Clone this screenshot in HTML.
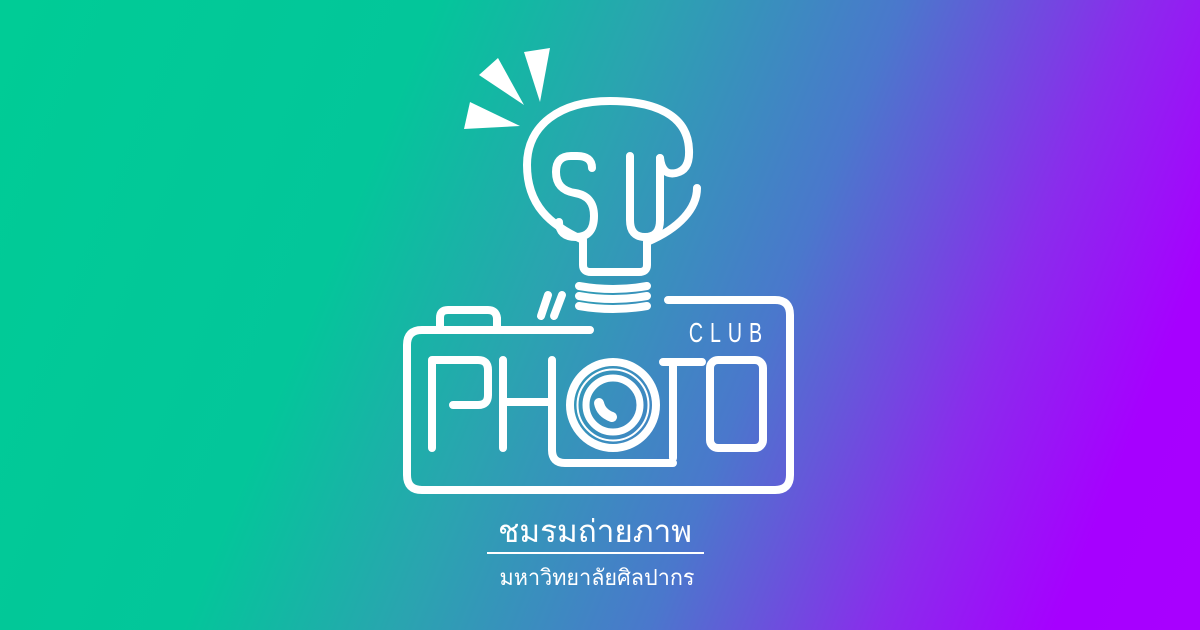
<!DOCTYPE html>
<html><head><meta charset="utf-8"><style>
html,body{margin:0;padding:0}
body{width:1200px;height:630px;overflow:hidden;background:linear-gradient(112deg,#00cc96 0%,#03c69a 30%,#2aa4b0 45%,#4a78cc 62%,#8a2cec 78%,#a600ff 90%,#a800ff 100%)}
svg{position:absolute;left:0;top:0}
</style></head><body>
<svg width="1200" height="630" viewBox="0 0 1200 630">
<g fill="#fff">
<polygon points="524,52 550,48 540,102"/>
<polygon points="479,75 498,58 524,105"/>
<polygon points="464,129 470,102 520,126"/>
</g>
<g fill="none" stroke="#fff" stroke-width="8" stroke-linecap="round" stroke-linejoin="round">
<path d="M660,158 Q662,176 676,173 Q690,170 689,150 C688,115 655,101 610,101 C560,101 527,125 527,165 C527,205 550,225 583,240 V265 Q583,272 591,272 H639 Q647,272 647,265 V242 C680,228 697,208 697,188"/>
<path d="M592,168 Q592,156 577,156 H571 Q556,156 556,172 Q556,190 575,193 Q594,196 594,216 Q594,237 576,237 Q559,237 559,222"/>
<path d="M630,156 V220 Q630,237 645,237 Q660,237 660,220 V158"/>
<path d="M579,286 Q613,292 647,286"/>
<path d="M579,296 Q613,302 647,296"/>
<path d="M579,306 Q613,312 647,306"/>
<path d="M541,316 L548,295"/>
<path d="M554,316 L562,295"/>
<path d="M668,300 H775 Q790,300 790,315 V475 Q790,490 775,490 H422 Q407,490 407,475 V345 Q407,330 422,330 H590"/>
<path d="M440,330 V318 Q440,310 448,310 H488 Q496,310 497,318 V330"/>
<path d="M432,448 V360 H478 Q488,360 488,370 V395 Q488,405 478,405 H453"/>
<path d="M503,360 V448 M503,402 H550 M552,360 V450 Q552,463 565,463 H673"/>
<path d="M663,362 H702 M673,362 V458"/>
<rect x="710" y="360" width="53" height="88" rx="8"/>
<circle cx="613" cy="405" r="43"/>
<circle cx="613" cy="405" r="27" stroke-width="7"/>
<circle cx="613" cy="405" r="35.5" stroke-width="2"/>
<path d="M599,403 Q601,413 612,417" stroke-width="10"/>
</g>
<text transform="translate(729,342) scale(0.7,1)" fill="#fff" font-family="Liberation Sans Narrow, Liberation Sans, sans-serif" font-size="28" text-anchor="middle" letter-spacing="10">CLUB</text>
<text x="595" y="542" fill="#fff" font-family="Liberation Sans, Noto Sans CJK SC, DejaVu Sans, sans-serif" font-size="31" text-anchor="middle" textLength="194" lengthAdjust="spacingAndGlyphs">ชมรมถ่ายภาพ</text>
<rect x="487" y="552" width="217" height="2" fill="#fff"/>
<text x="597" y="585" fill="#fff" font-family="Liberation Sans, Noto Sans CJK SC, DejaVu Sans, sans-serif" font-size="22" text-anchor="middle" textLength="195" lengthAdjust="spacingAndGlyphs">มหาวิทยาลัยศิลปากร</text>
</svg>
</body></html>
